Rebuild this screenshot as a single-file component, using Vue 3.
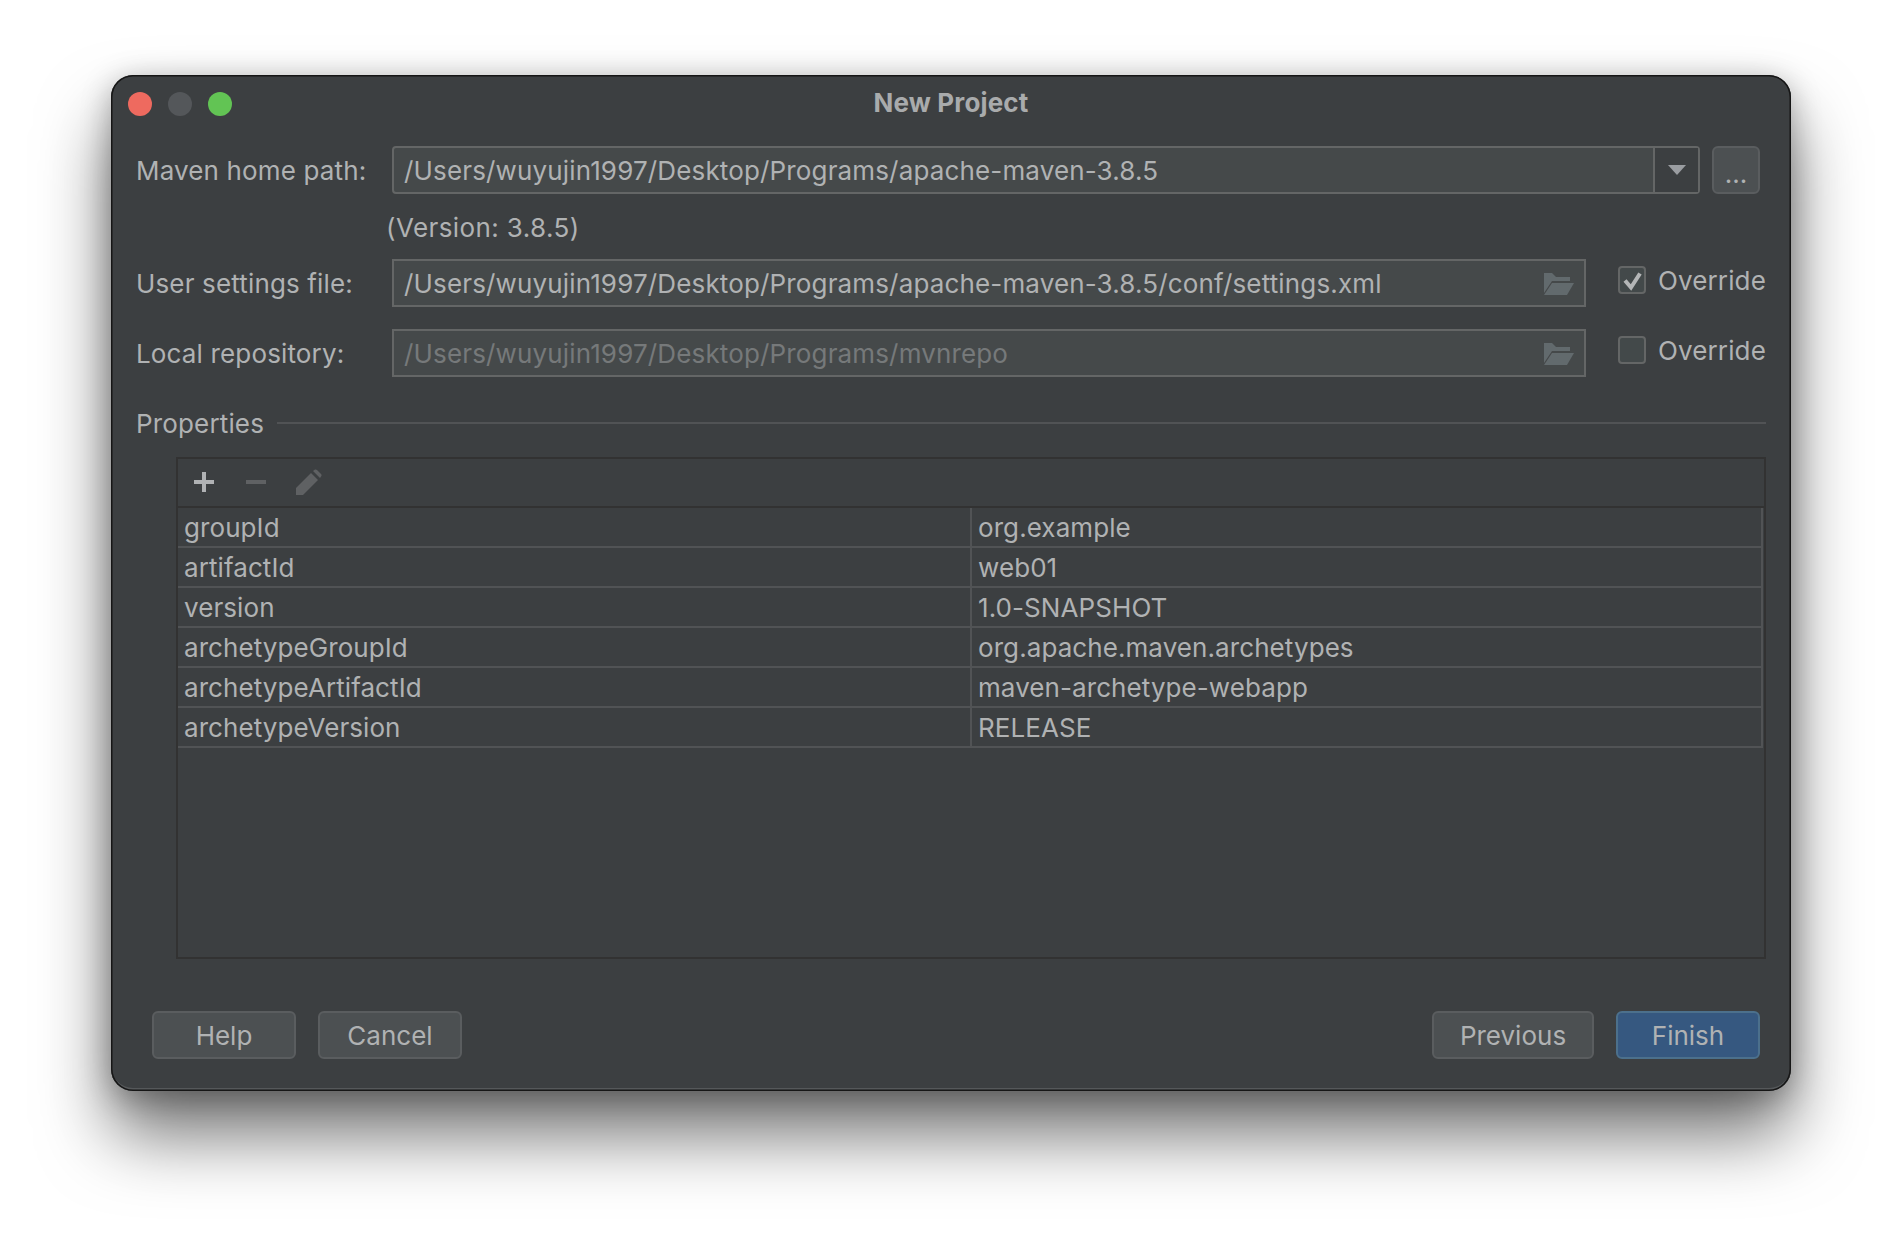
<script setup>
const props = [
  ['groupId', 'org.example'],
  ['artifactId', 'web01'],
  ['version', '1.0-SNAPSHOT'],
  ['archetypeGroupId', 'org.apache.maven.archetypes'],
  ['archetypeArtifactId', 'maven-archetype-webapp'],
  ['archetypeVersion', 'RELEASE']
]
</script>

<template>
  <div class="page">
    <div class="window">
      <div class="titlebar">
        <div class="lights">
          <span class="light red"></span>
          <span class="light grey"></span>
          <span class="light green"></span>
        </div>
        <div class="title">New Project</div>
      </div>

      <div class="form">
        <div class="row">
          <label class="label">Maven home path:</label>
          <div class="field combo">
            <span class="value">/Users/wuyujin1997/Desktop/Programs/apache-maven-3.8.5</span>
            <span class="arrow"><i></i></span>
          </div>
          <button class="dots">...</button>
        </div>
        <div class="version">(Version: 3.8.5)</div>
        <div class="row">
          <label class="label">User settings file:</label>
          <div class="field path">
            <span class="value">/Users/wuyujin1997/Desktop/Programs/apache-maven-3.8.5/conf/settings.xml</span>
            <svg class="folder" width="30" height="22" viewBox="0 0 30 22">
              <path d="M0 0H8L12 4H26V8H8L0 20Z" fill="#626a6d" />
              <path d="M8 10H30L23 22H0Z" fill="#626a6d" />
            </svg>
          </div>
          <div class="override">
            <span class="box">
              <svg width="24" height="24" viewBox="0 0 24 24">
                <path d="M5 12.5L11 19.5L20 5.5" fill="none" stroke="#b4b6b7" stroke-width="4" />
              </svg>
            </span>
            <span>Override</span>
          </div>
        </div>
        <div class="row second">
          <label class="label">Local repository:</label>
          <div class="field path">
            <span class="value muted">/Users/wuyujin1997/Desktop/Programs/mvnrepo</span>
            <svg class="folder" width="30" height="22" viewBox="0 0 30 22">
              <path d="M0 0H8L12 4H26V8H8L0 20Z" fill="#626a6d" />
              <path d="M8 10H30L23 22H0Z" fill="#626a6d" />
            </svg>
          </div>
          <div class="override">
            <span class="box"></span>
            <span>Override</span>
          </div>
        </div>

        <div class="section">
          <span>Properties</span>
          <div class="rule"></div>
        </div>

        <div class="table">
          <div class="toolbar">
            <svg width="20" height="20" viewBox="0 0 20 20">
              <path d="M8 0h4v8h8v4h-8v8H8v-8H0V8h8z" fill="#b0b2b4" />
            </svg>
            <svg width="20" height="4" viewBox="0 0 20 4">
              <rect width="20" height="4" fill="#5f6163" />
            </svg>
            <svg class="pencil" width="26" height="26" viewBox="0 0 26 26">
              <path d="M0 26V19L15 4L22 11L7 26Z" fill="#5f6163" />
              <path d="M17 2L19 .6Q20 0 21 1L25 5Q26 6 25.4 7L24 9Z" fill="#5f6163" />
            </svg>
          </div>
          <div class="rows">
            <div class="tr" v-for="p in props" :key="p[0]">
              <div class="td first">{{ p[0] }}</div>
              <div class="td second-col">{{ p[1] }}</div>
            </div>
          </div>
        </div>
      </div>

      <div class="footer">
        <button class="btn">Help</button>
        <button class="btn">Cancel</button>
        <div class="spacer"></div>
        <button class="btn prev">Previous</button>
        <button class="btn primary">Finish</button>
      </div>
    </div>
  </div>
</template>

<style>
body {
  background: #fff;
}
</style>

<style scoped>
.page {
  width: 1902px;
  height: 1238px;
  padding: 75px 111px 147px;
  box-sizing: border-box;
  overflow: hidden;
  background: #fff;
  font-family: Inter, "Liberation Sans", sans-serif;
  font-size: 26px;
  letter-spacing: 0.15px;
  color: #b0b2b3;
}
.window {
  height: 1016px;
  box-sizing: border-box;
  display: flex;
  flex-direction: column;
  background: #3c3f41;
  border-radius: 22px;
  box-shadow: inset 0 0 0 1.5px #161616, inset 0 -3px 0 0 #55585a, 0 44px 70px rgba(0, 0, 0, 0.55), 0 6px 30px rgba(0, 0, 0, 0.28);
}
.titlebar {
  height: 71px;
  flex: none;
  display: flex;
  align-items: center;
  padding-bottom: 13px;
  box-sizing: border-box;
  position: relative;
}
.lights {
  display: flex;
  gap: 16px;
  padding-left: 17px;
}
.light {
  width: 24px;
  height: 24px;
  border-radius: 50%;
}
.red { background: #ee6a5f; }
.grey { background: #54575a; }
.green { background: #62c454; }
.title {
  position: absolute;
  left: 0;
  right: 0;
  top: 12px;
  text-align: center;
  font-weight: 700;
  color: #a9abac;
}
.form {
  padding: 0 25px;
  display: flex;
  flex-direction: column;
}
.row {
  display: flex;
  align-items: center;
  height: 48px;
}
.row.second {
  margin-top: 22px;
}
.label {
  width: 256px;
  flex: none;
}
.field {
  height: 48px;
  box-sizing: border-box;
  border: 2px solid #646666;
  background: #45494a;
  display: flex;
  align-items: center;
  padding-left: 10px;
}
.combo {
  width: 1308px;
  border-radius: 4px;
  padding-right: 0;
}
.value {
  flex: 1;
  white-space: nowrap;
}
.muted {
  color: #76797a;
}
.arrow {
  width: 43px;
  height: 100%;
  flex: none;
  background: #3c3f41;
  border-left: 2px solid #646666;
  display: flex;
  align-items: center;
  justify-content: center;
}
.arrow i {
  width: 0;
  height: 0;
  border-left: 9px solid transparent;
  border-right: 9px solid transparent;
  border-top: 10px solid #9a9da1;
}
.dots {
  width: 48px;
  height: 48px;
  margin-left: 12px;
  border: 2px solid #5a5d5f;
  border-radius: 6px;
  background: #4c5052;
  color: #b0b2b3;
  font: inherit;
  padding: 6px 0 0;
}
.path {
  width: 1194px;
  padding-right: 10px;
}
.folder {
  flex: none;
  margin-top: 1px;
}
.override {
  display: flex;
  align-items: center;
  gap: 12px;
  margin-left: 32px;
  margin-top: -6px;
}
.box {
  width: 28px;
  height: 28px;
  box-sizing: border-box;
  border: 2px solid #646666;
  border-radius: 4px;
  background: #43494a;
  display: flex;
  align-items: center;
  justify-content: center;
}
.version {
  height: 65px;
  line-height: 67px;
  padding-left: 250px;
  box-sizing: border-box;
  white-space: nowrap;
  letter-spacing: 0.4px;
}
.section {
  height: 46px;
  margin-top: 23px;
  display: flex;
  align-items: center;
  gap: 13px;
  white-space: nowrap;
}
.rule {
  flex: 1;
  height: 2px;
  background: #515355;
}
.table {
  margin: 11px 0 0 40px;
  height: 502px;
  box-sizing: border-box;
  border: 2px solid #323232;
  letter-spacing: 0.08px;
}
.toolbar {
  height: 49px;
  box-sizing: border-box;
  border-bottom: 2px solid #323232;
  display: flex;
  align-items: center;
  gap: 32px;
  padding: 0 0 1px 16px;
}
.pencil {
  margin-left: -2px;
}
.rows {
  margin-right: 1px;
  border-right: 2px solid #515355;
  height: 240px;
}
.tr {
  display: grid;
  grid-template-columns: 794px 1fr;
  height: 40px;
  box-sizing: border-box;
  border-bottom: 2px solid #515355;
}
.td {
  padding-left: 6px;
  line-height: 40px;
  white-space: nowrap;
}
.second-col {
  padding-left: 6px;
}
.first {
  border-right: 2px solid #515355;
}
.footer {
  display: flex;
  gap: 22px;
  padding: 52px 31px 0 41px;
}
.spacer {
  flex: 1;
}
.btn {
  width: 144px;
  height: 48px;
  box-sizing: border-box;
  border: 2px solid #5a5d5f;
  border-radius: 6px;
  background: #4c5052;
  color: #b0b2b3;
  font: inherit;
  padding: 0;
}
.prev {
  width: 162px;
}
.primary {
  background: #365880;
  border-color: #4c708c;
}
</style>
